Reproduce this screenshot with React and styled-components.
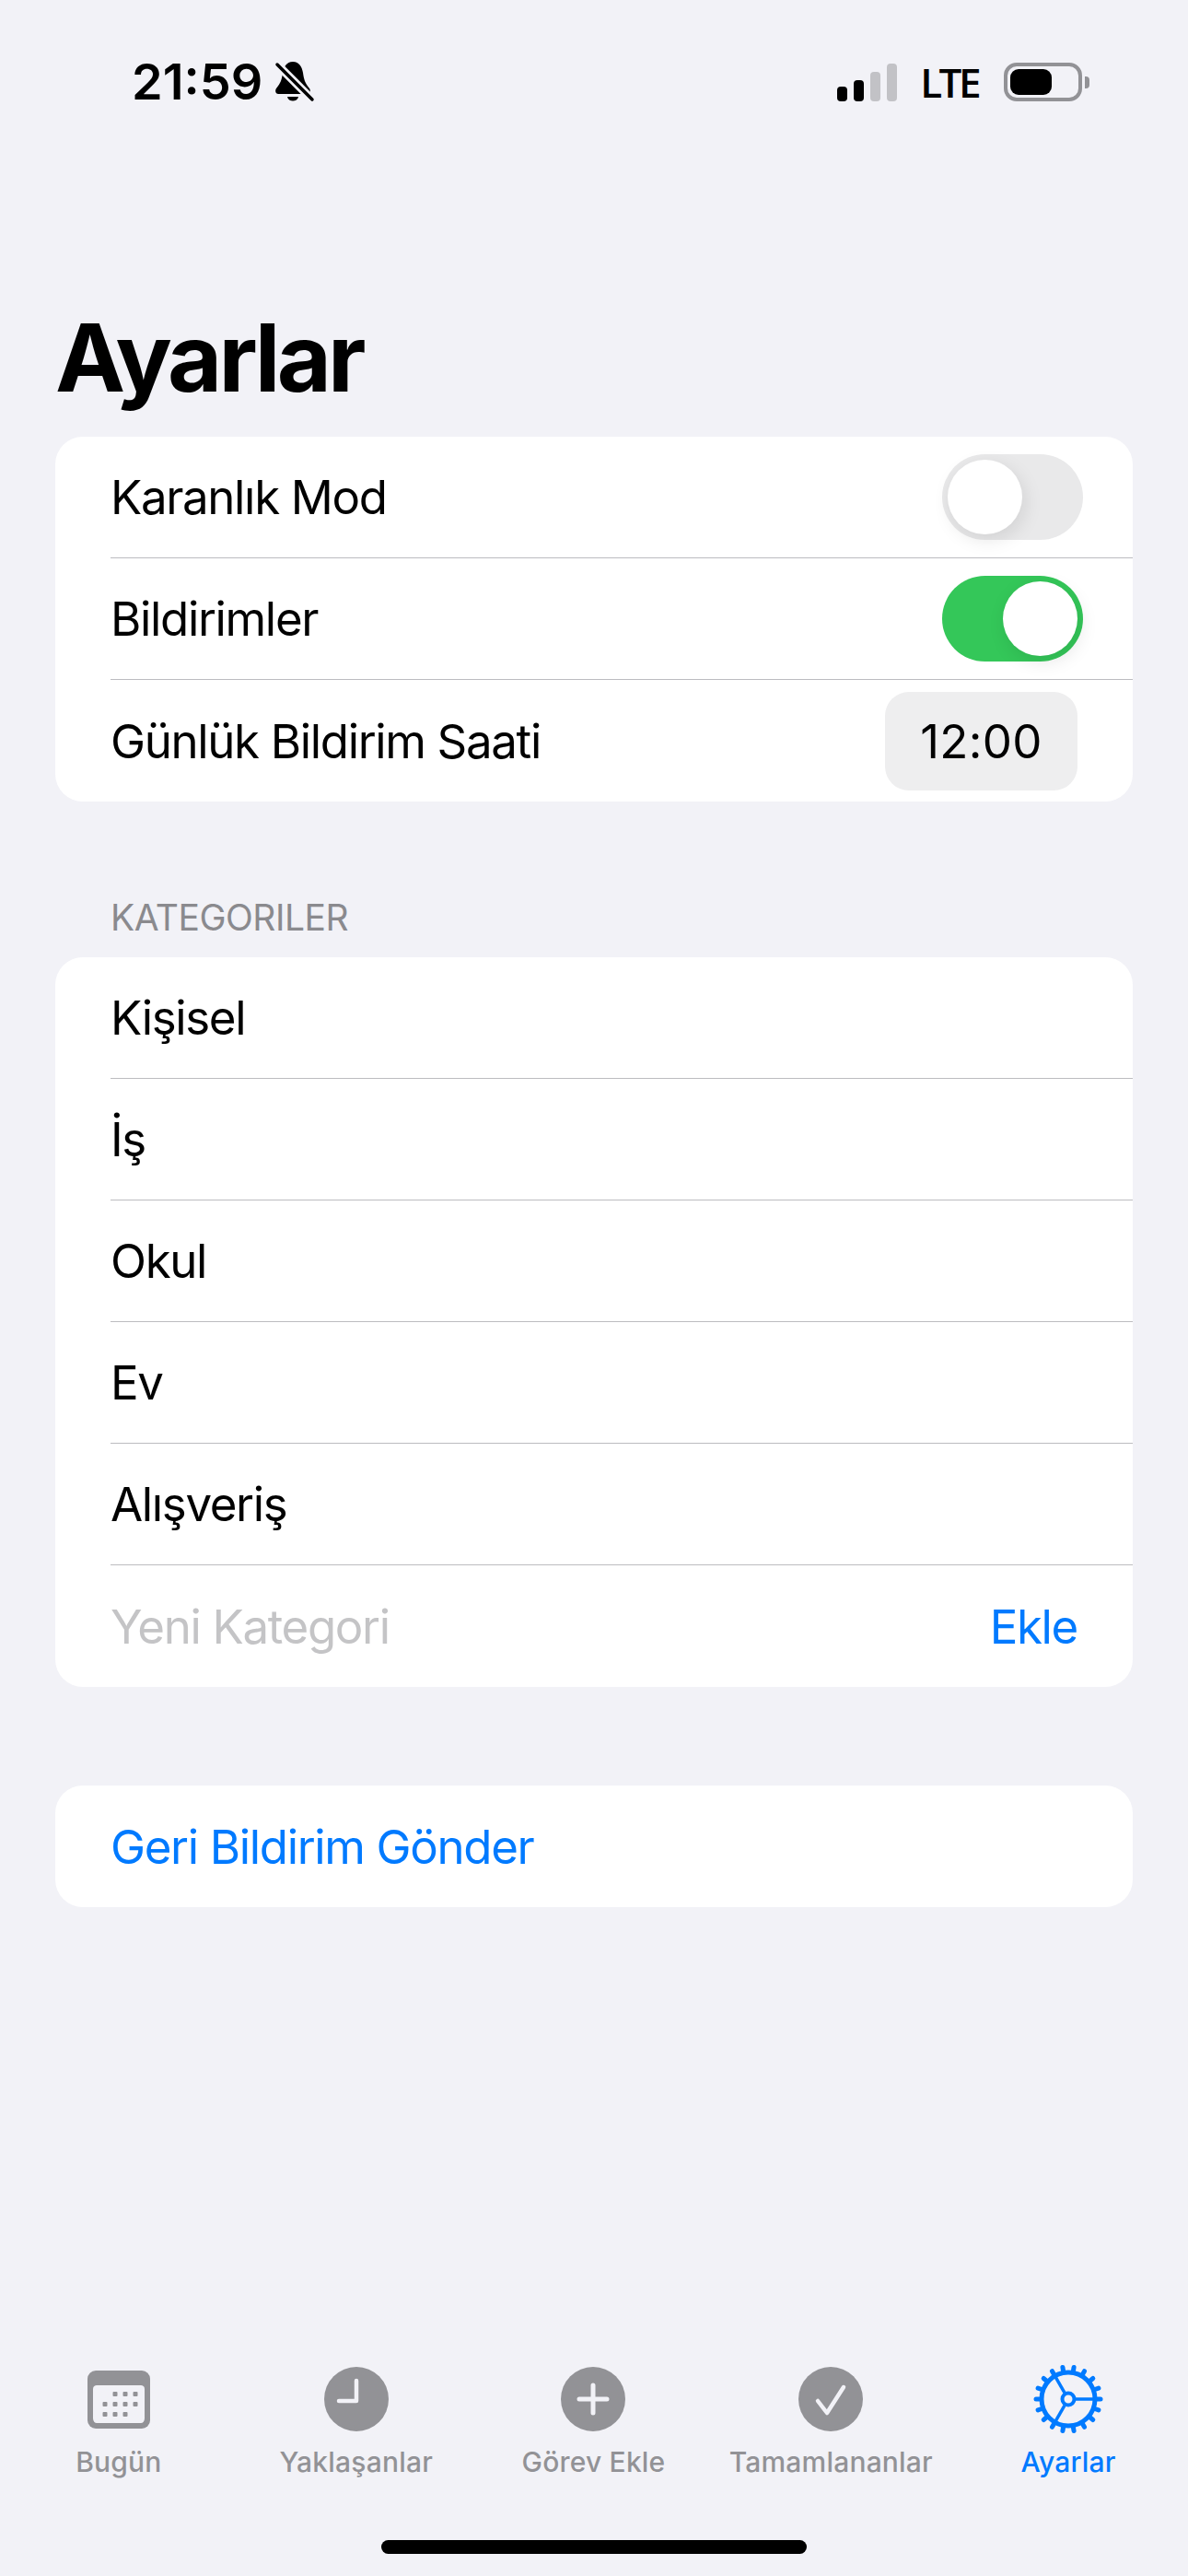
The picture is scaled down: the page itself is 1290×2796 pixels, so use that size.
import styled, { createGlobalStyle } from "styled-components";

const categories = ["Kişisel", "İş", "Okul", "Ev", "Alışveriş"];

const BellSlashIcon = () => (
  <svg width="44" height="46" viewBox="0 0 44 46">
    <path d="M20 1C27 1 30 7 31 13C32 20 33 24 38 30C40 33 38 36 36 36H4C2 36 0 33 2 30C7 24 8 20 9 13C10 7 13 1 20 1Z" fill="#000" />
    <path d="M14 39H26C25 45 15 45 14 39Z" fill="#000" />
    <path d="M2 3L41 42" stroke="#f2f2f7" strokeWidth="9" />
    <path d="M3 4L41 42" stroke="#000" strokeWidth="3.5" strokeLinecap="round" />
  </svg>
);

const CalendarIcon = () => {
  const dots = [
    [1, 0], [2, 0], [3, 0],
    [0, 1], [1, 1], [2, 1], [3, 1],
    [0, 2], [1, 2], [2, 2],
  ];
  return (
    <svg width="70" height="70" viewBox="0 0 70 70">
      <rect x="1" y="4" width="68" height="63" rx="9" fill="#929296" />
      <path d="M7 24C7 21 9 20 11 20H59C61 20 63 21 63 24V56C63 59 61 61 59 61H11C9 61 7 59 7 56Z" fill="#f2f2f7" />
      {dots.map(([c, r]) => (
        <rect key={`${c}-${r}`} x={17.5 + c * 11} y={27 + r * 11} width="5" height="5" rx="1" fill="#929296" />
      ))}
    </svg>
  );
};

const ClockIcon = () => (
  <svg width="70" height="70" viewBox="0 0 70 70">
    <circle cx="35" cy="35" r="35" fill="#929296" />
    <path d="M35 15V37H16" fill="none" stroke="#f2f2f7" strokeWidth="4.5" strokeLinecap="round" strokeLinejoin="round" />
  </svg>
);

const PlusIcon = () => (
  <svg width="70" height="70" viewBox="0 0 70 70">
    <circle cx="35" cy="35" r="35" fill="#929296" />
    <path d="M35 20V50M20 35H50" stroke="#f2f2f7" strokeWidth="5" strokeLinecap="round" />
  </svg>
);

const CheckIcon = () => (
  <svg width="70" height="70" viewBox="0 0 70 70">
    <circle cx="35" cy="35" r="35" fill="#929296" />
    <path d="M21 37L31 50L49 22" fill="none" stroke="#f2f2f7" strokeWidth="4.5" strokeLinecap="round" strokeLinejoin="round" />
  </svg>
);

const GearIcon = () => {
  const teeth = Array.from({ length: 18 }, (_, i) => (i * 20 + 10) * (Math.PI / 180));
  const spokes = [0, 120, 240].map((d) => (d * Math.PI) / 180);
  return (
    <svg width="76" height="76" viewBox="-38 -38 76 76">
      <circle r="29" fill="none" stroke="#007aff" strokeWidth="5" />
      {teeth.map((a) => (
        <line
          key={a}
          x1={Math.sin(a) * 30}
          y1={-Math.cos(a) * 30}
          x2={Math.sin(a) * 35}
          y2={-Math.cos(a) * 35}
          stroke="#007aff"
          strokeWidth="5"
          strokeLinecap="round"
        />
      ))}
      {spokes.map((a) => (
        <line
          key={a}
          x1={Math.cos(a) * 8}
          y1={-Math.sin(a) * 8}
          x2={Math.cos(a) * 29}
          y2={-Math.sin(a) * 29}
          stroke="#007aff"
          strokeWidth="3.5"
        />
      ))}
      <circle r="6.5" fill="none" stroke="#007aff" strokeWidth="4" />
    </svg>
  );
};

const tabs = [
  { label: "Bugün", icon: <CalendarIcon /> },
  { label: "Yaklaşanlar", icon: <ClockIcon /> },
  { label: "Görev Ekle", icon: <PlusIcon /> },
  { label: "Tamamlananlar", icon: <CheckIcon /> },
  { label: "Ayarlar", icon: <GearIcon />, active: true },
];

const App = () => {
  return (
    <Page>
      <GlobalStyle />
      <StatusBar>
        <StatusLeft>
          <Clock>21:59</Clock>
          <BellSlashIcon />
        </StatusLeft>
        <StatusRight>
          <Signal>
            <SignalBar $height={16} $on />
            <SignalBar $height={23} $on />
            <SignalBar $height={32} />
            <SignalBar $height={41} />
          </Signal>
          <Network>LTE</Network>
          <Battery>
            <BatteryLevel />
          </Battery>
        </StatusRight>
      </StatusBar>

      <Title>Ayarlar</Title>

      <Card>
        <Row $tight>
          <RowLabel>Karanlık Mod</RowLabel>
          <Toggle>
            <Thumb />
          </Toggle>
        </Row>
        <Row $tight>
          <RowLabel>Bildirimler</RowLabel>
          <Toggle $on>
            <Thumb />
          </Toggle>
        </Row>
        <Row>
          <RowLabel>Günlük Bildirim Saati</RowLabel>
          <TimeBox>12:00</TimeBox>
        </Row>
      </Card>

      <SectionLabel>KATEGORILER</SectionLabel>
      <Card>
        {categories.map((name) => (
          <Row key={name}>
            <RowLabel>{name}</RowLabel>
          </Row>
        ))}
        <Row>
          <RowLabel $placeholder>Yeni Kategori</RowLabel>
          <RowLabel $link>Ekle</RowLabel>
        </Row>
      </Card>

      <FeedbackCard>
        <Row>
          <RowLabel $link>Geri Bildirim Gönder</RowLabel>
        </Row>
      </FeedbackCard>

      <TabBar>
        {tabs.map((tab) => (
          <Tab key={tab.label} $active={tab.active}>
            <TabIcon>{tab.icon}</TabIcon>
            <TabLabel>{tab.label}</TabLabel>
          </Tab>
        ))}
      </TabBar>
      <HomeArea>
        <HomeIndicator />
      </HomeArea>
    </Page>
  );
};

export default App;

const GlobalStyle = createGlobalStyle`
  html, body {
    margin: 0;
    background: #f2f2f7;
  }
`;

const Page = styled.div`
  display: flex;
  flex-direction: column;
  width: 1290px;
  height: 2796px;
  overflow: hidden;
  background: #f2f2f7;
  color: #000;
  font-family: Inter, "Noto Sans", sans-serif;
`;

const StatusBar = styled.div`
  display: flex;
  justify-content: space-between;
  align-items: center;
  height: 64px;
  padding: 57px 115px 0 143px;
`;

const StatusLeft = styled.div`
  display: flex;
  align-items: center;
  gap: 13px;
`;

const Clock = styled.span`
  font-size: 54px;
  font-weight: 600;
  line-height: 64px;
`;

const StatusRight = styled.div`
  display: flex;
  align-items: center;
  gap: 25px;
`;

const Signal = styled.div`
  display: flex;
  align-items: flex-end;
  gap: 7px;
  height: 41px;
`;

const SignalBar = styled.div`
  width: 11px;
  height: ${({ $height }) => $height}px;
  border-radius: 4px;
  background: ${({ $on }) => ($on ? "#000" : "#c2c2c6")};
`;

const Network = styled.span`
  margin-right: 3px;
  font-family: "Open Sans", sans-serif;
  font-size: 44px;
  font-weight: 600;
  line-height: 44px;
  letter-spacing: -3.5px;
`;

const Battery = styled.div`
  position: relative;
  box-sizing: border-box;
  width: 85px;
  height: 42px;
  padding: 3px;
  border: 4px solid #929296;
  border-radius: 14px;

  &::after {
    content: "";
    position: absolute;
    top: 11px;
    right: -12px;
    width: 5px;
    height: 13px;
    border-radius: 0 4px 4px 0;
    background: #929296;
  }
`;

const BatteryLevel = styled.div`
  width: 45px;
  height: 100%;
  border-radius: 9px;
  background: #000;
`;

const Title = styled.h1`
  margin: 206px 0 0;
  padding: 0 60px;
  font-size: 102px;
  font-weight: 700;
  line-height: 122px;
  letter-spacing: -3.8px;
`;

const Card = styled.div`
  display: flex;
  flex-direction: column;
  margin: 25px 60px 0;
  border-radius: 30px;
  background: #fff;
  overflow: hidden;
`;

const FeedbackCard = styled(Card)`
  margin-top: 107px;
`;

const Row = styled.div`
  display: flex;
  justify-content: space-between;
  align-items: center;
  box-sizing: border-box;
  height: 132px;
  margin-left: 60px;
  padding-right: ${({ $tight }) => ($tight ? "54px" : "60px")};
  border-bottom: 1px solid #bcbcc0;

  &:last-child {
    border-bottom: none;
  }
`;

const RowLabel = styled.span`
  padding-top: 1px;
  font-size: 51px;
  font-weight: 375;
  line-height: 62px;
  letter-spacing: -1.35px;
  color: ${({ $link, $placeholder }) =>
    $link ? "#007aff" : $placeholder ? "#c4c4c6" : "#000"};
`;

const Toggle = styled.div`
  display: flex;
  justify-content: ${({ $on }) => ($on ? "flex-end" : "flex-start")};
  box-sizing: border-box;
  width: 153px;
  height: 93px;
  padding: 6px;
  border-radius: 47px;
  background: ${({ $on }) => ($on ? "#34c759" : "#e9e9ea")};
`;

const Thumb = styled.div`
  width: 81px;
  height: 81px;
  border-radius: 50%;
  background: #fff;
  box-shadow: 3px 6px 20px rgba(0, 0, 0, 0.1);
`;

const TimeBox = styled.div`
  display: flex;
  justify-content: center;
  align-items: center;
  width: 209px;
  height: 107px;
  border-radius: 26px;
  background: #eeeeef;
  font-size: 51px;
  font-weight: 375;
  letter-spacing: 0.3px;
`;

const SectionLabel = styled.div`
  margin: 102px 0 -6px;
  padding: 0 120px;
  font-size: 39px;
  line-height: 48px;
  letter-spacing: -0.5px;
  color: #8a8a8e;
`;

const TabBar = styled.div`
  display: grid;
  grid-template-columns: repeat(5, 1fr);
  margin-top: auto;
  padding-right: 1px;
`;

const Tab = styled.div`
  display: flex;
  flex-direction: column;
  align-items: center;
  color: ${({ $active }) => ($active ? "#007aff" : "#929296")};
`;

const TabIcon = styled.div`
  display: flex;
  justify-content: center;
  align-items: center;
  height: 76px;
`;

const TabLabel = styled.span`
  margin-top: 12px;
  font-size: 30px;
  font-weight: 500;
  line-height: 36px;
  letter-spacing: 0.2px;
`;

const HomeArea = styled.div`
  display: flex;
  justify-content: center;
  align-items: flex-end;
  height: 106px;
  padding-bottom: 24px;
  box-sizing: border-box;
`;

const HomeIndicator = styled.div`
  width: 462px;
  height: 15px;
  border-radius: 8px;
  background: #000;
`;
